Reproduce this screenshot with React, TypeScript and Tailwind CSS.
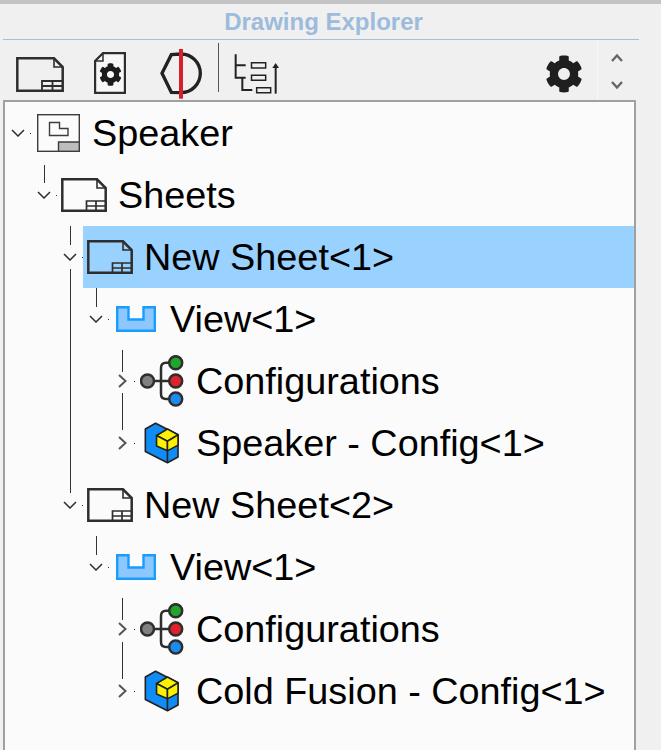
import React from "react";
import { FaCog } from "react-icons/fa";

const INK = "#2e2e2e";

function SheetIcon() {
  return (
    <svg width="46" height="34" viewBox="0 0 46 34" fill="none" stroke={INK} strokeWidth="2.5">
      <path d="M1.3 1.3H36L44.7 10V32.7H1.3Z" />
      <path d="M36 1.3V10H44.7" strokeWidth="1.6" />
      <path d="M25.5 33V23H45M25.5 28H45M35 23V33" strokeWidth="1.7" />
    </svg>
  );
}

function AssemblyDrawingIcon() {
  return (
    <svg width="43" height="38" viewBox="0 0 43 38" fill="none" stroke="#3c3c3c" strokeWidth="1.4">
      <rect x="21.5" y="28" width="20.5" height="9" fill="#bdbdbd" stroke="none" />
      <rect x="0.7" y="0.7" width="41.6" height="36.6" />
      <path d="M21.5 37V28H42" />
      <path d="M12.5 8.5H22.5V14.5H31V21.5H12.5Z" />
    </svg>
  );
}

function ViewIcon() {
  return (
    <svg width="40" height="26" viewBox="0 0 40 26">
      <path d="M1.2 1.2H12.5V13.5H27.5V1.2H38.8V24.8H1.2Z" fill="#8cc8ff" stroke="#1a9cff" strokeWidth="2.4" />
    </svg>
  );
}

function ConfigIcon() {
  return (
    <svg width="44" height="52" viewBox="0 0 44 52" fill="none" stroke={INK} strokeWidth="2.5">
      <path d="M13 26H30M29 7.7H26Q21 7.7 21 13V39Q21 44 26 44H29" />
      <circle cx="7.5" cy="26" r="6.5" fill="#808080" />
      <circle cx="35.7" cy="7.7" r="6.5" fill="#22a52a" />
      <circle cx="35.7" cy="26" r="6.5" fill="#e0222a" />
      <circle cx="35.7" cy="44" r="6.5" fill="#1a8cf0" />
    </svg>
  );
}

function PartIcon() {
  return (
    <svg width="36" height="42" viewBox="252 243 112 131" stroke="#222" strokeWidth="5" strokeLinejoin="round">
      <path d="M288 247L358 283V352L325 370L256 335V265Z" fill="#0f8cf5" />
      <path d="M325 333V370" fill="none" />
      <path d="M325 265L358 283L325 303L291 285Z" fill="#fff200" />
      <path d="M291 285L325 303V333L291 318Z" fill="#fff200" />
      <path d="M325 303L358 283V315L325 333Z" fill="#fff200" />
    </svg>
  );
}

function Chevron({ open }: { open: boolean }) {
  return open ? (
    <svg width="14" height="8" viewBox="0 0 14 8" fill="none" stroke={INK} strokeWidth="1.5">
      <path d="M1 1L7 7L13 1" />
    </svg>
  ) : (
    <svg width="9" height="14" viewBox="0 0 9 14" fill="none" stroke="#555" strokeWidth="2">
      <path d="M1 1L7.5 7L1 13" />
    </svg>
  );
}

function Row({
  indent,
  open,
  selected,
  icon,
  label,
}: {
  indent: string;
  open: boolean;
  selected?: boolean;
  icon: React.ReactNode;
  label: string;
}) {
  return (
    <div className={`flex h-[62px] items-stretch ${indent}`}>
      <div className="relative flex w-[26px] shrink-0 items-center justify-center">
        <Chevron open={open} />
        <span className="absolute right-0 top-[31px] h-px w-px bg-[#333333]" />
      </div>
      <div className={`flex min-w-0 flex-1 items-center ${selected ? "bg-[#99d1ff]" : ""}`}>
        <div className="flex w-[54px] shrink-0 items-center justify-center">{icon}</div>
        <span className="whitespace-nowrap pl-[7px] pt-[2px] text-[37.8px] leading-none text-black [font-family:'Liberation_Sans',sans-serif]">
          {label}
        </span>
      </div>
    </div>
  );
}

export default function App() {
  return (
    <div className="flex h-[750px] w-[661px] flex-col overflow-hidden bg-[#f0f0f0]">
      <div className="h-[4px] shrink-0 bg-[#c4c4c4]" />
      <div className="ml-[3px] flex h-[36px] w-[636px] shrink-0 items-center justify-center border-b border-[#a3c0dc] pl-[5px] text-[24px] font-bold text-[#9dbbdc] [font-family:'Liberation_Sans',sans-serif]">
        Drawing Explorer
      </div>

      <div className="flex h-[60px] shrink-0 items-center">
        <div className="ml-[16px] mt-[8px]">
          <svg width="48" height="35" viewBox="0 0 48 35" fill="none" stroke={INK} strokeWidth="2.5">
            <path d="M1.3 1.3H38L46.7 10V33.7H1.3Z" />
            <path d="M38 1.3V10H46.7" strokeWidth="1.6" />
            <path d="M26 34V24H47M26 29H47M36.5 24V34" strokeWidth="1.8" />
          </svg>
        </div>
        <div className="relative ml-[30px] mt-[6px] h-[42px] w-[32px]">
          <svg width="32" height="42" viewBox="0 0 32 42" fill="none" stroke={INK} strokeWidth="2.2">
            <path d="M9 1.1H30.9V40.9H1.1V9Z" fill="#f8f8f8" />
            <path d="M9 1V9H1.5" strokeWidth="1.5" />
          </svg>
          <FaCog className="absolute left-[5px] top-[11px] text-[23px] text-[#1c1c1c]" />
        </div>
        <div className="ml-[34px] mt-[8px]">
          <svg width="44" height="50" viewBox="478 148 130 150" fill="none">
            <path d="M540 163A58 58 0 0 1 540 279L511 278L483 221L511 165Z" stroke="#222" strokeWidth="10" />
            <path d="M540 148V297" stroke="#d9202a" strokeWidth="12" />
          </svg>
        </div>
        <div className="mb-[6px] ml-[14px] h-[49px] w-px bg-[#555555]" />
        <div className="ml-[14px] mt-[8px]">
          <svg width="47" height="40" viewBox="697 164 141 120" fill="none" stroke="#222" strokeWidth="6">
            <path d="M705 165V235H735M705 198H735M725 235V272H755" />
            <path d="M752.5 190.5H795V206H752.5ZM752.5 228H795V243H752.5ZM768 265H810V280H768Z" strokeWidth="4.5" />
            <path d="M825 200V283" />
            <path d="M815 206L825 191L835 206Z" fill="#222" stroke="none" />
          </svg>
        </div>
        <FaCog className="ml-[265px] mt-[8px] text-[38px] text-[#1f1f1f]" />
        <div className="ml-[14px] h-full w-px bg-[#f8f8f8]" />
        <div className="ml-[13px] flex flex-col gap-[19px] pt-[3px]">
          <svg width="12" height="9" viewBox="0 0 12 9" fill="none" stroke="#666" strokeWidth="2.4">
            <path d="M1 8L6 2.5L11 8" />
          </svg>
          <svg width="12" height="9" viewBox="0 0 12 9" fill="none" stroke="#666" strokeWidth="2.4">
            <path d="M1 1L6 6.5L11 1" />
          </svg>
        </div>
      </div>

      <div className="relative ml-[3px] w-[633px] flex-1 border-2 border-b-0 border-[#a0a0a0] bg-[#fbfbfb]">
        <Row indent="pl-0" open icon={<AssemblyDrawingIcon />} label="Speaker" />
        <Row indent="pl-[26px]" open icon={<SheetIcon />} label="Sheets" />
        <Row indent="pl-[52px]" open selected icon={<SheetIcon />} label="New Sheet<1>" />
        <Row indent="pl-[78px]" open icon={<ViewIcon />} label="View<1>" />
        <Row indent="pl-[104px]" open={false} icon={<ConfigIcon />} label="Configurations" />
        <Row indent="pl-[104px]" open={false} icon={<PartIcon />} label="Speaker - Config<1>" />
        <Row indent="pl-[52px]" open icon={<SheetIcon />} label="New Sheet<2>" />
        <Row indent="pl-[78px]" open icon={<ViewIcon />} label="View<1>" />
        <Row indent="pl-[104px]" open={false} icon={<ConfigIcon />} label="Configurations" />
        <Row indent="pl-[104px]" open={false} icon={<PartIcon />} label="Cold Fusion - Config<1>" />

        <span className="absolute left-[39px] top-[63px] h-[18px] w-px bg-[#333333]" />
        <span className="absolute left-[65px] top-[124px] h-[19px] w-px bg-[#333333]" />
        <span className="absolute left-[65px] top-[167px] h-[224px] w-px bg-[#333333]" />
        <span className="absolute left-[91px] top-[186px] h-[19px] w-px bg-[#333333]" />
        <span className="absolute left-[117px] top-[248px] h-[22px] w-px bg-[#333333]" />
        <span className="absolute left-[117px] top-[291px] h-[37px] w-px bg-[#333333]" />
        <span className="absolute left-[91px] top-[434px] h-[19px] w-px bg-[#333333]" />
        <span className="absolute left-[117px] top-[496px] h-[22px] w-px bg-[#333333]" />
        <span className="absolute left-[117px] top-[540px] h-[37px] w-px bg-[#333333]" />
      </div>
    </div>
  );
}
